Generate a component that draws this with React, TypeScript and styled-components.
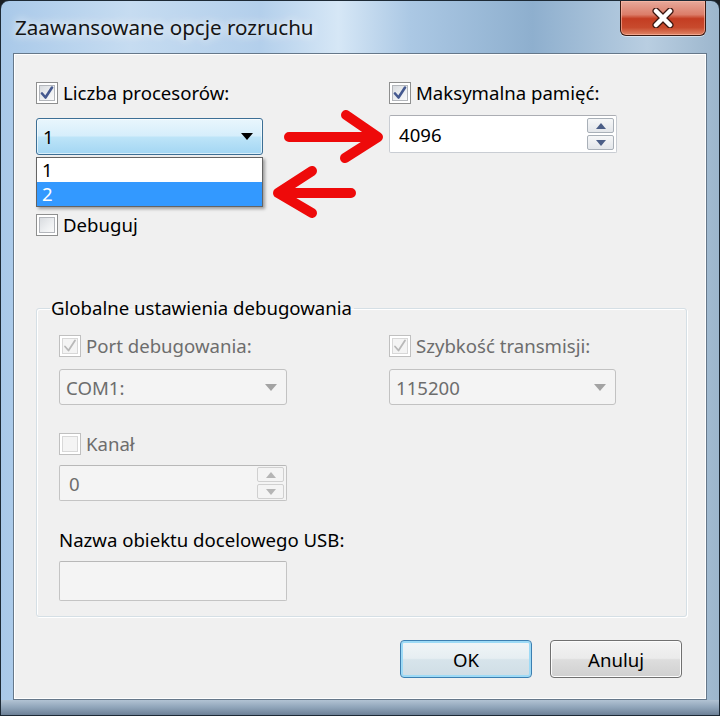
import styled, { createGlobalStyle } from "styled-components";

const GlobalStyle = createGlobalStyle`
  html, body {
    margin: 0;
    padding: 0;
    background: #1b1f24;
  }
  body {
    font-family: "Noto Sans", "Open Sans", sans-serif;
    font-size: 18.6px;
    color: #000;
  }
  * {
    box-sizing: border-box;
  }
`;

const Window = styled.div`
  position: relative;
  width: 720px;
  height: 716px;
  display: flex;
  flex-direction: column;
  border: 1px solid #1d2a36;
  border-radius: 9px 9px 0 0;
  overflow: hidden;
  background: linear-gradient(
    90deg,
    #a9c9e9 0%,
    #c6dcf1 18%,
    #b3cfeb 36%,
    #d6e7f6 47%,
    #abc8e4 57%,
    #8eafce 74%,
    #b9cee1 90%,
    #9cb6cd 100%
  );
`;

const TitleBar = styled.div`
  height: 52px;
  display: flex;
  justify-content: space-between;
  align-items: flex-start;
  padding: 0 13px 0 14px;
`;

const Title = styled.div`
  padding-top: 12px;
  font-size: 20.6px;
  line-height: 28px;
  color: #151515;
  text-shadow: 0 0 8px rgba(255, 255, 255, 0.95), 0 0 14px rgba(255, 255, 255, 0.7);
`;

const CloseButton = styled.div`
  width: 86px;
  height: 35px;
  display: flex;
  align-items: center;
  justify-content: center;
  border: 1px solid #3b1a12;
  border-top: none;
  border-radius: 0 0 6px 6px;
  box-shadow: inset 0 0 0 1px rgba(255, 190, 170, 0.6), 0 1px 0 rgba(255, 255, 255, 0.5);
  background: linear-gradient(
    180deg,
    #e7a99b 0%,
    #dc7d69 40%,
    #c43d22 52%,
    #c84a2d 78%,
    #df8566 100%
  );
`;

const Client = styled.div`
  flex: 1;
  margin: 0 12px;
  background: #f0f0f0;
  border: 1px solid #66788a;
  box-shadow: inset 0 0 0 1px #ffffff;
  padding: 28px 19px 0 22px;
  display: flex;
  flex-direction: column;
`;

const BottomFrame = styled.div`
  height: 15px;
  background: linear-gradient(180deg, #b2c3d3 0%, #8fa4b9 50%, #6d8197 100%);
`;

const TopGrid = styled.div`
  display: grid;
  grid-template-columns: 353px 1fr;
`;

const Column = styled.div`
  display: flex;
  flex-direction: column;
  align-items: flex-start;
`;

const CheckRow = styled.div<{ $disabled?: boolean; $gap?: number }>`
  display: flex;
  align-items: center;
  gap: 5px;
  height: 22px;
  margin-top: ${(p) => p.$gap ?? 0}px;
  color: ${(p) => (p.$disabled ? "#6d6d6d" : "#000")};
  line-height: 22px;
  white-space: nowrap;
`;

const Box = styled.span<{ $disabled?: boolean }>`
  width: 22px;
  height: 22px;
  flex: none;
  display: flex;
  align-items: center;
  justify-content: center;
  border: 1px solid ${(p) => (p.$disabled ? "#c0c0c0" : "#8e8f8f")};
  background: #fff;
  padding: 2px;
`;

const BoxInner = styled.span<{ $disabled?: boolean }>`
  width: 100%;
  height: 100%;
  display: flex;
  align-items: center;
  justify-content: center;
  border: 1px solid ${(p) => (p.$disabled ? "#d8d8d8" : "#b3b6bb")};
  background: ${(p) =>
    p.$disabled ? "#f4f4f4" : "linear-gradient(135deg, #d9dce0 0%, #eef0f2 60%, #fafafa 100%)"};
`;

const ComboWrap = styled.div<{ $gap: number }>`
  position: relative;
  margin-top: ${(p) => p.$gap}px;
`;

const Combo = styled.div<{ $disabled?: boolean; $focused?: boolean; $w?: number }>`
  width: ${(p) => p.$w ?? 228}px;
  height: ${(p) => (p.$focused ? 37 : 36)}px;
  display: flex;
  align-items: center;
  justify-content: space-between;
  padding: 0 9px 0 6px;
  border-radius: 3px;
  border: 1px solid ${(p) => (p.$focused ? "#3c6f95" : p.$disabled ? "#c2c2c2" : "#8e8f8f")};
  color: ${(p) => (p.$disabled ? "#6d6d6d" : "#000")};
  background: ${(p) =>
    p.$focused
      ? "linear-gradient(180deg, #e9f6fd 0%, #d6eefb 48%, #bde4f8 52%, #a3d6f3 100%)"
      : "#f4f4f4"};
  box-shadow: ${(p) => (p.$focused ? "inset 0 0 0 1px rgba(255,255,255,0.6)" : "none")};
`;

const DropList = styled.div`
  position: absolute;
  top: calc(100% + 2px);
  left: 0;
  width: 227px;
  border: 1px solid #646464;
  background: #fff;
  box-shadow: 2px 2px 3px rgba(0, 0, 0, 0.35);
  z-index: 2;
`;

const DropItem = styled.div<{ $selected?: boolean }>`
  height: 24px;
  line-height: 24px;
  padding-left: 5px;
  background: ${(p) => (p.$selected ? "#3399ff" : "#fff")};
  color: ${(p) => (p.$selected ? "#fff" : "#000")};
`;

const NumberField = styled.div<{ $disabled?: boolean; $gap: number; $h: number }>`
  width: 228px;
  height: ${(p) => p.$h}px;
  margin-top: ${(p) => p.$gap}px;
  display: flex;
  align-items: center;
  justify-content: space-between;
  padding: 0 2px 0 9px;
  border-radius: 2px;
  border: 1px solid ${(p) => (p.$disabled ? "#c4c4c4" : "#c9cdd3")};
  border-top-color: ${(p) => (p.$disabled ? "#b8b8b8" : "#abadb3")};
  background: ${(p) => (p.$disabled ? "#f4f4f4" : "#fff")};
  color: ${(p) => (p.$disabled ? "#6d6d6d" : "#000")};
`;

const Spin = styled.div`
  display: flex;
  flex-direction: column;
  gap: 2px;
`;

const SpinButton = styled.div<{ $disabled?: boolean }>`
  width: 27px;
  height: 15px;
  display: flex;
  align-items: center;
  justify-content: center;
  border: 1px solid ${(p) => (p.$disabled ? "#d0d0d0" : "#a9b0b8")};
  border-radius: 2px;
  background: ${(p) =>
    p.$disabled ? "#f4f4f4" : "linear-gradient(180deg, #f6f7f8 0%, #e3e6ea 100%)"};
`;

const GroupBox = styled.fieldset`
  margin: 60px 0 0 0;
  padding: 15px 0 15px 23px;
  width: 651px;
  border: 1px solid #d5dfe5;
  border-radius: 3px;
  box-shadow: inset 1px 1px 0 #ffffff, 1px 1px 0 #ffffff;
`;

const Legend = styled.legend`
  margin-left: -10px;
  padding: 0 2px 0 1px;
  line-height: 24px;
  color: #000;
`;

const GroupGrid = styled.div`
  display: grid;
  grid-template-columns: 330px 1fr;
  margin-left: -1px;
`;

const FieldLabel = styled.div<{ $gap: number }>`
  margin-top: ${(p) => p.$gap}px;
  height: 22px;
  line-height: 22px;
  white-space: nowrap;
`;

const TextField = styled.div`
  width: 228px;
  height: 40px;
  margin-top: 10px;
  border: 1px solid #c4c4c4;
  border-top-color: #b8b8b8;
  border-radius: 2px;
  background: #f4f4f4;
`;

const ButtonRow = styled.div`
  display: flex;
  justify-content: flex-end;
  gap: 18px;
  margin-top: 23px;
  padding-right: 5px;
`;

const Button = styled.div<{ $default?: boolean }>`
  width: 132px;
  height: 38px;
  display: flex;
  align-items: center;
  justify-content: center;
  border-radius: 4px;
  border: 1px solid ${(p) => (p.$default ? "#3c7fb1" : "#707070")};
  box-shadow: ${(p) =>
    p.$default ? "inset 0 0 0 2px #9ddaf6" : "inset 0 0 0 1px #fcfcfc"};
  background: ${(p) =>
    p.$default
      ? "linear-gradient(180deg, #f1f5f7 0%, #e6eef2 48%, #d7e4eb 52%, #cfdde5 100%)"
      : "linear-gradient(180deg, #f3f3f3 0%, #ebebeb 48%, #dddddd 52%, #d0d0d0 100%)"};
  color: #000;
`;

const Annotations = styled.svg`
  position: absolute;
  left: -1px;
  top: -1px;
  pointer-events: none;
  z-index: 5;
`;

const CheckMark = ({ disabled }: { disabled?: boolean }) => (
  <svg width="14" height="14" viewBox="0 0 14 14">
    <path
      d="M2 7.5 L5.5 11.5 L12 1.5"
      fill="none"
      stroke={disabled ? "#b8b8b8" : "#45598f"}
      strokeWidth={disabled ? 1.8 : 2.6}
      strokeLinecap="round"
      strokeLinejoin="round"
    />
  </svg>
);

const CheckBox = ({ checked, disabled }: { checked?: boolean; disabled?: boolean }) => (
  <Box $disabled={disabled}>
    <BoxInner $disabled={disabled}>{checked && <CheckMark disabled={disabled} />}</BoxInner>
  </Box>
);

const Arrow = ({ disabled }: { disabled?: boolean }) => (
  <svg width="12" height="7" viewBox="0 0 12 7">
    <path d="M0 0 L12 0 L6 7 Z" fill={disabled ? "#a3a3a3" : "#000"} />
  </svg>
);

const SpinGlyph = ({ up, disabled }: { up?: boolean; disabled?: boolean }) => (
  <svg width="10" height="6" viewBox="0 0 10 6">
    <path d={up ? "M0 6 L10 6 L5 0 Z" : "M0 0 L10 0 L5 6 Z"} fill={disabled ? "#b5b5b5" : "#4b5e87"} />
  </svg>
);

export default function App() {
  return (
    <>
      <GlobalStyle />
      <Window>
        <TitleBar>
          <Title>Zaawansowane opcje rozruchu</Title>
          <CloseButton>
            <svg width="26" height="20" viewBox="0 0 26 20">
              <path
                d="M6 3 L20 17 M20 3 L6 17"
                stroke="#3a1610"
                strokeWidth="7"
                strokeLinecap="round"
              />
              <path
                d="M6 3 L20 17 M20 3 L6 17"
                stroke="#ffffff"
                strokeWidth="4.5"
                strokeLinecap="round"
              />
            </svg>
          </CloseButton>
        </TitleBar>

        <Client>
          <TopGrid>
            <Column>
              <CheckRow>
                <CheckBox checked />
                Liczba procesorów:
              </CheckRow>
              <ComboWrap $gap={14}>
                <Combo $focused $w={227}>
                  <span>1</span>
                  <Arrow />
                </Combo>
                <DropList>
                  <DropItem>1</DropItem>
                  <DropItem $selected>2</DropItem>
                </DropList>
              </ComboWrap>
              <CheckRow $gap={59}>
                <CheckBox />
                Debuguj
              </CheckRow>
            </Column>
            <Column>
              <CheckRow>
                <CheckBox checked />
                Maksymalna pamięć:
              </CheckRow>
              <NumberField $gap={11} $h={38}>
                <span>4096</span>
                <Spin>
                  <SpinButton>
                    <SpinGlyph up />
                  </SpinButton>
                  <SpinButton>
                    <SpinGlyph />
                  </SpinButton>
                </Spin>
              </NumberField>
            </Column>
          </TopGrid>

          <GroupBox>
            <Legend>Globalne ustawienia debugowania</Legend>
            <GroupGrid>
              <Column>
                <CheckRow $disabled>
                  <CheckBox checked disabled />
                  Port debugowania:
                </CheckRow>
                <ComboWrap $gap={12}>
                  <Combo $disabled>
                    <span>COM1:</span>
                    <Arrow disabled />
                  </Combo>
                </ComboWrap>
                <CheckRow $disabled $gap={28}>
                  <CheckBox disabled />
                  Kanał
                </CheckRow>
                <NumberField $disabled $gap={10} $h={36}>
                  <span>0</span>
                  <Spin>
                    <SpinButton $disabled>
                      <SpinGlyph up disabled />
                    </SpinButton>
                    <SpinButton $disabled>
                      <SpinGlyph disabled />
                    </SpinButton>
                  </Spin>
                </NumberField>
                <FieldLabel $gap={28}>Nazwa obiektu docelowego USB:</FieldLabel>
                <TextField />
              </Column>
              <Column>
                <CheckRow $disabled>
                  <CheckBox checked disabled />
                  Szybkość transmisji:
                </CheckRow>
                <ComboWrap $gap={12}>
                  <Combo $disabled $w={227}>
                    <span>115200</span>
                    <Arrow disabled />
                  </Combo>
                </ComboWrap>
              </Column>
            </GroupGrid>
          </GroupBox>

          <ButtonRow>
            <Button $default>OK</Button>
            <Button>Anuluj</Button>
          </ButtonRow>
        </Client>

        <BottomFrame />

        <Annotations width="720" height="716" viewBox="0 0 720 716">
          <g
            fill="none"
            stroke="#ee0a0a"
            strokeWidth="10"
            strokeLinecap="round"
            strokeLinejoin="round"
          >
            <path d="M289 137 L377 137 M346 115 L378 137 L345 158" />
            <path d="M351 193 L279 193 M312 171 L278 193 L312 213" />
          </g>
        </Annotations>
      </Window>
    </>
  );
}
